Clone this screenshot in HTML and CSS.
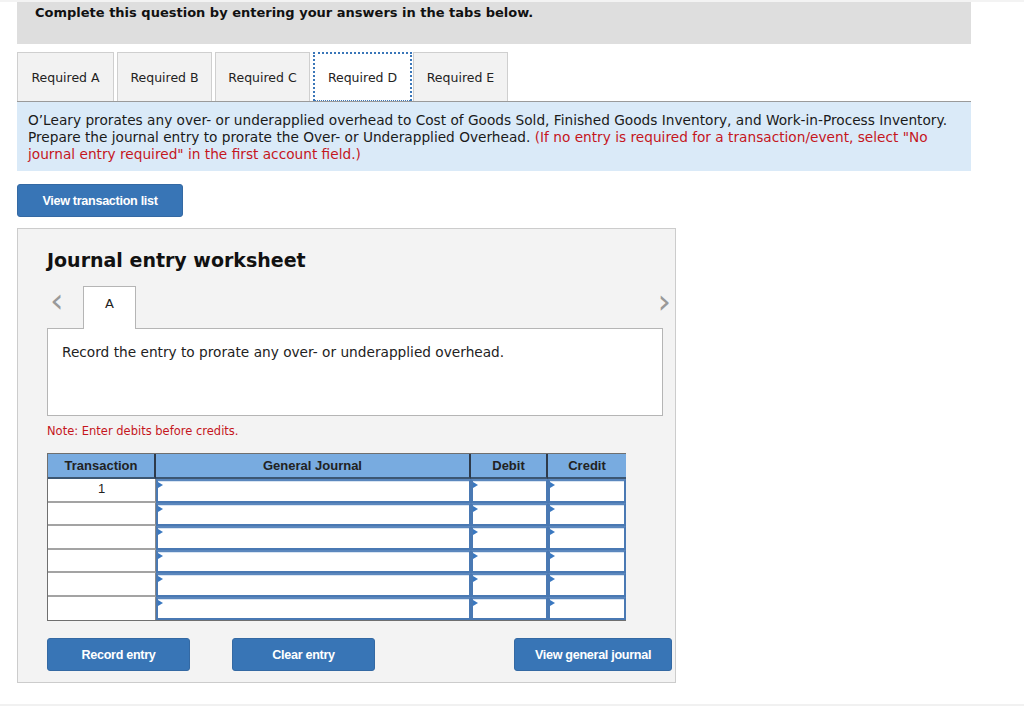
FILE: index.html
```html
<!DOCTYPE html>
<html lang="en">
<head>
    <meta charset="UTF-8">
    <title>Journal entry worksheet</title>
    <link rel="stylesheet" href="styles.css">
</head>
<body>
    <div class="page">
        <div class="question-bar">Complete this question by entering your answers in the tabs below.</div>

        <!-- Required tabs -->
        <div class="req-tabs">
            <div class="req-tab">Required A</div>
            <div class="req-tab">Required B</div>
            <div class="req-tab">Required C</div>
            <div class="req-tab active">Required D</div>
            <div class="req-tab">Required E</div>
        </div>

        <div class="instructions">
            O’Leary prorates any over- or underapplied overhead to Cost of Goods Sold, Finished Goods Inventory, and Work-in-Process Inventory. Prepare the journal entry to prorate the Over- or Underapplied Overhead. <span class="red">(If no entry is required for a transaction/event, select "No journal entry required" in the first account field.)</span>
        </div>

        <button class="btn btn-list">View transaction list</button>

        <!-- Worksheet -->
        <div class="worksheet">
            <h2 class="ws-title">Journal entry worksheet</h2>

            <div class="ws-nav">
                <span class="chev">&lsaquo;</span>
                <div class="ws-tab">A</div>
                <span class="chev chev-right">&rsaquo;</span>
            </div>

            <div class="ws-box">Record the entry to prorate any over- or underapplied overhead.</div>

            <p class="note">Note: Enter debits before credits.</p>

            <div class="journal">
                <div class="jh">Transaction</div>
                <div class="jh">General Journal</div>
                <div class="jh">Debit</div>
                <div class="jh">Credit</div>

                <div class="jt">1</div><div class="ji"></div><div class="ji"></div><div class="ji"></div>
                <div class="jt"></div><div class="ji"></div><div class="ji"></div><div class="ji"></div>
                <div class="jt"></div><div class="ji"></div><div class="ji"></div><div class="ji"></div>
                <div class="jt"></div><div class="ji"></div><div class="ji"></div><div class="ji"></div>
                <div class="jt"></div><div class="ji"></div><div class="ji"></div><div class="ji"></div>
                <div class="jt"></div><div class="ji"></div><div class="ji"></div><div class="ji"></div>
            </div>

            <div class="ws-buttons">
                <button class="btn btn-ws">Record entry</button>
                <button class="btn btn-ws">Clear entry</button>
                <button class="btn btn-ws btn-journal">View general journal</button>
            </div>
        </div>
    </div>
    <div class="bottom-rule"></div>
</body>
</html>
```

FILE: styles.css
```css
* {
    box-sizing: border-box;
    margin: 0;
    padding: 0;
}

body {
    font-family: "DejaVu Sans", Verdana, sans-serif;
    background: #fff;
    color: #222;
    border-top: 2px solid #f3f3f3;
}

.page {
    width: 954px;
    margin-left: 17px;
}

.question-bar {
    background: #dedede;
    height: 42px;
    padding: 3px 0 0 18px;
    font-size: 13px;
    font-weight: bold;
    color: #111;
}

/* Required tabs */
.req-tabs {
    display: flex;
    gap: 3px;
    margin-top: 8px;
    border-bottom: 1px solid #9a9a9a;
}

.req-tab {
    width: 95px;
    height: 49px;
    background: #f2f2f2;
    border: 1px solid #cfcfcf;
    border-bottom: none;
    font-size: 12.5px;
    color: #222;
    display: flex;
    align-items: center;
    justify-content: center;
}

.req-tab:first-child {
    width: 97px;
}

.req-tab.active {
    background: #fff;
    width: 99px;
    border: 1px dotted #3a76b8;
    border-width: 2px 2px 1px 2px;
    margin-right: -2px;
}

.instructions {
    background: #daeaf8;
    padding: 10px 12px 8px 11px;
    font-size: 13.7px;
    line-height: 17px;
    color: #1a1a1a;
}

.red {
    color: #c5161d;
}

.btn {
    background: #3875b6;
    color: #fff;
    border: 1px solid #3469a3;
    border-radius: 3px;
    font-family: "Liberation Sans", Arial, sans-serif;
    font-weight: bold;
    font-size: 12.6px;
    letter-spacing: -0.3px;
    height: 33px;
}

.btn-list {
    display: block;
    width: 166px;
    margin-top: 13px;
}

/* Worksheet */
.worksheet {
    width: 659px;
    margin-top: 11px;
    background: #f3f3f3;
    border: 1px solid #cccccc;
    padding: 19px 3px 11px 29px;
}

.ws-title {
    font-size: 19px;
    font-weight: bold;
    color: #111;
    line-height: 24px;
}

.ws-nav {
    display: flex;
    align-items: flex-end;
    width: 626px;
    height: 42px;
    margin-top: 14px;
}

.chev {
    font-size: 34px;
    line-height: 42px;
    color: #999;
    width: 36px;
    padding-left: 3px;
    align-self: flex-start;
    margin-top: -7px;
}

.chev-right {
    margin-left: auto;
    width: auto;
    margin-top: -6px;
    margin-right: 2px;
}

.ws-tab {
    width: 53px;
    height: 43px;
    margin-bottom: -1px;
    background: #fff;
    border: 1px solid #b5b5b5;
    border-bottom: none;
    font-size: 13px;
    text-align: center;
    padding-top: 9px;
    position: relative;
    z-index: 1;
}

.ws-box {
    width: 616px;
    height: 88px;
    background: #fff;
    border: 1px solid #b5b5b5;
    padding: 15px 14px;
    font-size: 13.7px;
}

.note {
    color: #c5161d;
    font-size: 11.5px;
    margin-top: 8px;
}

/* Journal grid */
.journal {
    display: grid;
    grid-template-columns: 108px 315px 77px 78px;
    grid-template-rows: 25px repeat(6, 23.5px);
    width: 579px;
    margin-top: 15px;
    border: 1px solid #6f6f6f;
    background: #fff;
}

.jh {
    background: #78abe0;
    border-right: 2px solid #2e3a4a;
    border-bottom: 2px solid #3c5672;
    font-family: "Liberation Sans", Arial, sans-serif;
    font-weight: bold;
    font-size: 13px;
    color: #222;
    text-align: center;
    line-height: 23px;
}

.jh:nth-child(4) {
    border-right: none;
}

.jt {
    background: #fff;
    border-bottom: 2px solid #a3a3a3;
    border-right: 1px solid #8a8a8a;
    font-family: "Liberation Sans", Arial, sans-serif;
    font-size: 13px;
    text-align: center;
    line-height: 20px;
}

.journal .jt:nth-last-child(4) {
    border-bottom: none;
}

.ji {
    background: #fff;
    border: 2px solid #4a79b3;
    border-top-color: #5b87bd;
    box-shadow: inset 0 1px 0 #d8e4f2;
    position: relative;
}

.ji::before {
    content: "";
    position: absolute;
    left: 0;
    top: 1px;
    border-left: 5px solid #3a78c0;
    border-top: 3px solid transparent;
    border-bottom: 3px solid transparent;
}

.ws-buttons {
    display: flex;
    gap: 42px;
    margin-top: 17px;
}

.btn-ws {
    width: 143px;
}

.btn-journal {
    width: 158px;
    margin-left: auto;
}

.bottom-rule {
    margin-top: 21px;
    border-top: 2px solid #f1f1f1;
}
```
